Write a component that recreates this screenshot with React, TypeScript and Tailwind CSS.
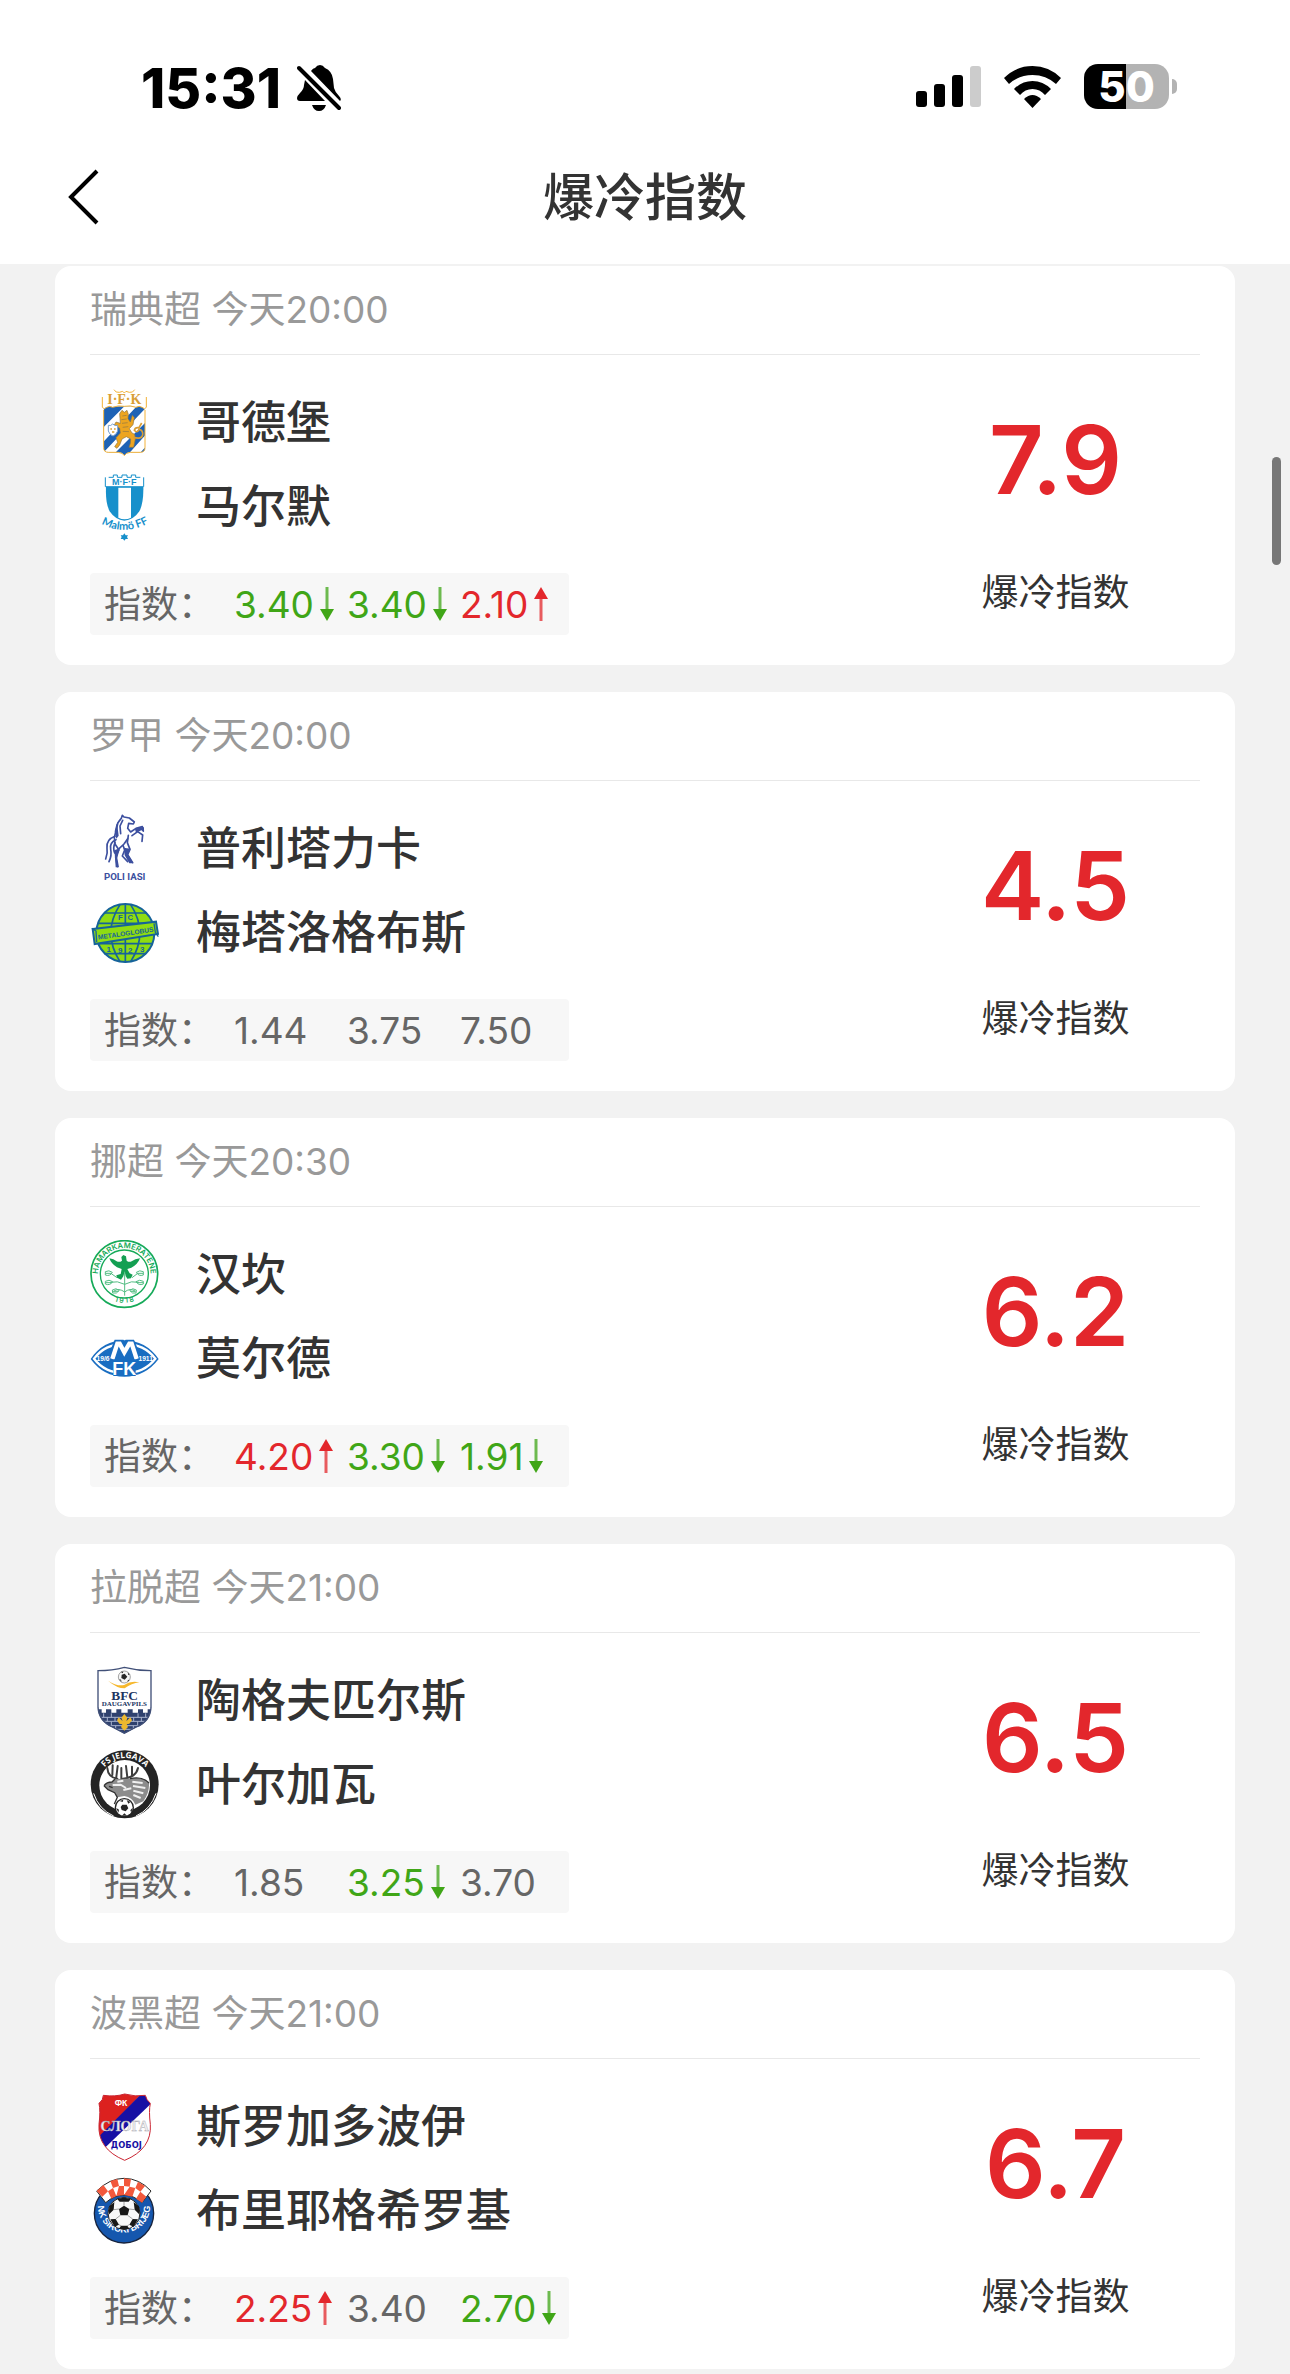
import type { ReactNode } from "react";
import clsx from "clsx";

type Trend = "up" | "down" | "flat";

interface Odd {
  value: string;
  trend: Trend;
}

interface Team {
  name: string;
  logo: ReactNode;
}

interface Match {
  league: string;
  time: string;
  home: Team;
  away: Team;
  odds: Odd[];
  score: string;
}

function Crest({ viewBox, children }: { viewBox: string; children: ReactNode }) {
  return (
    <svg viewBox={viewBox} className="size-[69px] shrink-0" aria-hidden="true">
      {children}
    </svg>
  );
}

function GothenburgCrest() {
  return (
    <Crest viewBox="30 24 207 207">
      <defs>
        <clipPath id="ifk">
          <path d="M71 88Q80 76 98 81Q133 76 168 81Q186 76 195 88V204Q195 217 181 217H151Q139 217 133 226Q127 217 115 217H85Q71 217 71 204Z" />
        </clipPath>
      </defs>
      <g clipPath="url(#ifk)">
        <rect x="66" y="70" width="134" height="160" fill="#1d62b5" />
        <path d="M56 156L150 62H186L66 190V222L214 66V110L96 228H66ZM140 228L210 150V186L172 228Z" fill="#fff" />
      </g>
      <path
        d="M67 51V82Q72 91 80 82Q88 76 98 82Q115 75 133 79Q151 75 168 82Q178 76 186 82Q194 91 199 82V51M71 90V203Q71 217 85 217H115Q128 218 133 227Q138 218 151 217H181Q195 217 195 203V90M102 29Q107 39 118 37L128 34L133 39L138 34L148 37Q159 39 164 29"
        fill="none"
        stroke="#f3b238"
        strokeWidth="3"
      />
      <text x="133" y="71" textAnchor="middle" fontSize="42" fontWeight="700" fill="#d99e35" className="font-['Liberation_Serif']">
        I·F·K
      </text>
      <path
        d="M119 101L126 91L133 97L141 91L145 103L144 116L151 126L157 106L163 113L159 134L148 146L156 159L164 163L166 177L161 202H147L151 190L152 177L139 170L126 177L119 195L111 205L104 200L113 187L108 173L121 159L119 145L103 135L108 126L121 130L120 115Z"
        fill="#eda520"
        stroke="#8d7545"
        strokeWidth="2"
      />
      <path d="M160 172Q185 179 188 165Q190 151 177 148Q171 161 163 151Q165 141 177 143L185 129" fill="none" stroke="#d99e35" strokeWidth="5" />
      <path d="M127 108L140 106M124 119L140 117M126 130L143 128M128 142L145 140M128 154L147 155" stroke="#8d7545" strokeWidth="2" />
      <path d="M85 136Q92 139 98 132Q105 139 113 136V153Q109 164 99 168Q88 164 85 153Z" fill="#fff" stroke="#7ba1cc" strokeWidth="3" />
      <path d="M91 147H96M102 147H107M96 156H103" stroke="#d99e35" strokeWidth="4" />
    </Crest>
  );
}

function MalmoCrest() {
  return (
    <Crest viewBox="30 276 207 207">
      <path d="M78 321H190Q191 370 178 394Q161 420 133 422Q106 420 89 394Q76 370 78 321Z" fill="#1790cb" />
      <path d="M115 323H153V413Q134 422 115 413Z" fill="#fff" />
      <path d="M76 292V320H191V292M86 292H100V285H112V292H126V285H141V292H154V285H167V292H181" fill="none" stroke="#1790cb" strokeWidth="3" />
      <text x="133" y="316" textAnchor="middle" fontSize="27" fontWeight="700" fill="#1790cb" className="font-['Liberation_Sans']">
        M·F·F
      </text>
      <path id="malmo-name" d="M62 430Q133 470 208 428" fill="none" />
      <text fontSize="33" fontWeight="700" fill="#1790cb" className="font-['Lato']">
        <textPath href="#malmo-name" startOffset="50%" textAnchor="middle">
          Malmö FF
        </textPath>
      </text>
      <path d="M133 460L137 466H144L141 471L144 477H137L133 482L129 477H122L125 471L122 466H129Z" fill="#1790cb" />
    </Crest>
  );
}

function IasiCrest() {
  return (
    <Crest viewBox="30 42 207 207">
      <g fill="none" stroke="#3c4f9f" strokeWidth="5" strokeLinejoin="round" strokeLinecap="round">
        <path d="M127 46L124 55L114 68L109 88L103 112L105 132M127 46L132 51L148 54L163 66L160 72L146 70L143 85L152 96L168 85L187 80L190 93M156 107L173 95L188 105L186 124M145 106L142 128L150 148L143 164L158 188M105 132L117 150L107 171L112 200" />
        <path d="M105 109Q78 119 81 144Q84 160 77 177M108 119Q88 127 92 148Q96 166 87 185M105 128Q98 144 104 159" />
        <path d="M128 61L120 78L122 101M143 116L132 132L118 145M129 136L134 150L127 168L143 185" />
      </g>
      <path d="M103 151L119 145L112 174L117 202H107L105 172ZM131 143L151 146L144 163L160 190H148L134 166ZM121 54L112 75L116 107L109 116L104 94L109 73ZM165 88L179 82L192 82V96L184 91L168 98Z" fill="#3c4f9f" />
      <text x="134" y="240" textAnchor="middle" fontSize="29" fontWeight="700" fill="#3c4f9f" className="font-['Roboto']">
        POLI IASI
      </text>
    </Crest>
  );
}

function MetaloglobusCrest() {
  return (
    <Crest viewBox="30 294 207 207">
      <circle cx="136" cy="399" r="87" fill="#8fdc12" stroke="#16639a" strokeWidth="6" />
      <g fill="none" stroke="#16639a" strokeWidth="5">
        <path d="M136 312V487M120 314Q65 399 120 485M152 314Q207 399 152 485M72 339H200M53 370H218M54 431H218M73 461H198" />
      </g>
      <path d="M38 387L228 365L234 402L44 432Z" fill="#8fdc12" stroke="#16639a" strokeWidth="6" />
      <path d="M36 385L48 393L50 426M235 410L226 397L222 370" fill="none" stroke="#16639a" strokeWidth="4" />
      <g fill="#16639a" fontWeight="700" textAnchor="middle" className="font-['Liberation_Sans']">
        <text x="137" y="407" fontSize="20" transform="rotate(-8 137 400)">
          METALOGLOBUS
        </text>
        <text x="121" y="359" fontSize="23">F</text>
        <text x="151" y="359" fontSize="23">C</text>
        <text x="86" y="457" fontSize="24">1</text>
        <text x="121" y="458" fontSize="24">9</text>
        <text x="151" y="458" fontSize="24">2</text>
        <text x="187" y="457" fontSize="24">3</text>
      </g>
    </Crest>
  );
}

function HamKamCrest() {
  return (
    <Crest viewBox="30 30 207 207">
      <circle cx="133" cy="132" r="100" fill="#fff" stroke="#16aa59" strokeWidth="5" />
      <circle cx="133" cy="132" r="72" fill="none" stroke="#16aa59" strokeWidth="4" />
      <path id="hamkam-top" d="M66 175A79 79 0 1 1 200 175" fill="none" />
      <text fontSize="23" fontWeight="600" fill="#16aa59" className="font-['Inter']">
        <textPath href="#hamkam-top" startOffset="50%" textAnchor="middle">
          HAMARKAMERATENE
        </textPath>
      </text>
      <path id="hamkam-year" d="M83 203A88 88 0 0 0 183 203" fill="none" />
      <text fontSize="21" fontWeight="600" fill="#16aa59" className="font-['Inter']">
        <textPath href="#hamkam-year" startOffset="50%" textAnchor="middle">
          1 9 1 8
        </textPath>
      </text>
      <path
        d="M88 85Q101 87 110 94Q119 98 126 92L124 81L130 75L138 79L140 92Q147 98 155 94Q165 87 180 85Q173 104 154 113L142 117L149 130L158 134L153 145L142 146L137 138L134 125L130 139L123 149L111 143L109 136L122 132L125 117L111 112Q94 102 88 85Z"
        fill="#139f52"
      />
      <g fill="none" stroke="#53bd83" strokeWidth="3">
        <path d="M134 125V197M134 163Q112 151 91 157M134 163Q154 151 176 157M134 186Q116 173 102 183M134 186Q150 173 165 183M111 143L94 131M156 143L172 131" />
        <path d="M76 125Q87 119 97 127Q90 140 76 135ZM190 125Q179 119 169 127Q176 140 190 135ZM76 154Q87 147 98 155Q90 168 76 162ZM190 154Q179 147 168 155Q176 168 190 162ZM97 180Q108 172 118 181Q110 193 98 189ZM169 180Q158 172 149 181Q157 193 168 189Z" />
        <path d="M77 130H95M171 130H189M77 158H96M171 158H189M99 184H116M151 184H167" />
      </g>
    </Crest>
  );
}

function MoldeCrest() {
  return (
    <Crest viewBox="30 282 207 207">
      <path d="M32 387Q70 331 133 331Q196 331 236 387Q196 440 133 440Q70 440 32 387Z" fill="#196dc1" />
      <path d="M42 386Q75 342 133 342Q193 342 226 386Q193 429 133 429Q75 429 42 386Z" fill="none" stroke="#fff" strokeWidth="7" />
      <path d="M91 386L110 338H125L133 354L142 338H156L176 386" fill="#196dc1" stroke="#196dc1" strokeWidth="18" />
      <path d="M97 387L112 341H119L133 367L148 341H155L170 387" fill="none" stroke="#fff" strokeWidth="13" />
      <rect x="100" y="388" width="67" height="50" fill="#196dc1" />
      <g fill="#fff" fontWeight="700" textAnchor="middle" className="font-['Liberation_Sans']">
        <text x="133" y="434" fontSize="54">FK</text>
        <text x="69" y="392" fontSize="20">19/6</text>
        <text x="197" y="392" fontSize="20">1911</text>
      </g>
    </Crest>
  );
}

function DaugavpilsCrest() {
  return (
    <Crest viewBox="30 32 207 207">
      <defs>
        <clipPath id="bfc">
          <path d="M53 45Q97 45 133 34Q172 45 214 45V157Q211 200 169 216L133 235L97 216Q56 198 53 157Z" />
        </clipPath>
      </defs>
      <g clipPath="url(#bfc)">
        <path d="M50 30H218V240H50Z" fill="#fff" />
        <path d="M50 162H65V172H78V162H94V172H109V162H124V172H143V162H158V172H174V162H189V172H203V162H218V240H50Z" fill="#2f416e" />
        <path d="M50 186H218M60 198H207M70 211H197M90 222H177M71 174V186M94 174V186M174 174V186M197 174V186M82 186V198M105 186V198M161 186V198M184 186V198M94 198V211M173 198V211M107 211V222M160 211V222" stroke="#a9b4cf" strokeWidth="3" />
      </g>
      <path d="M54 46Q97 46 133 36Q172 46 213 46V157Q210 199 169 215L133 234L97 215Q57 197 54 157Z" fill="none" stroke="#415078" strokeWidth="4" />
      <circle cx="133" cy="65" r="18" fill="#f5f5f5" stroke="#777" strokeWidth="2" />
      <path d="M125 58L134 55L142 64L134 73L124 68ZM122 49L130 49L128 54ZM143 51L149 58L145 59ZM117 71L123 73L125 80ZM144 74L149 73L142 80Z" fill="#252525" />
      <path d="M84 76Q112 94 132 89Q153 75 178 81Q155 84 134 99Q111 99 84 76Z" fill="#f6b82d" />
      <g fill="#20345f" fontWeight="700" textAnchor="middle" className="font-['Liberation_Serif']">
        <text x="134" y="133" fontSize="40">BFC</text>
        <text x="133" y="153" fontSize="21">DAUGAVPILS</text>
      </g>
      <path d="M133 176L142 187L139 198L151 186L156 195L148 205L140 207L144 215L133 226L123 215L127 207L118 205L111 195L116 186L128 198L124 187Z" fill="#edb82f" />
    </Crest>
  );
}

function JelgavaCrest() {
  return (
    <Crest viewBox="30 284 207 207">
      <circle cx="134" cy="387" r="102" fill="#242424" />
      <circle cx="134" cy="390" r="76" fill="#fff" />
      <path id="jelgava-name" d="M58 366A80 80 0 0 1 212 366" fill="none" />
      <text fontSize="25" fontWeight="700" fill="#fff" className="font-['Open_Sans']">
        <textPath href="#jelgava-name" startOffset="50%" textAnchor="middle">
          FS JELGAVA
        </textPath>
      </text>
      <g fill="none" stroke="#3d3d3d" strokeWidth="6" strokeLinejoin="round" strokeLinecap="round">
        <path d="M112 370Q84 366 82 338M97 359L98 330M109 365L113 332M124 370L124 338M129 370Q168 366 174 338M142 366L138 332M156 360L156 334" />
      </g>
      <path d="M105 371L150 370Q187 362 207 383Q209 412 190 438L166 448Q157 425 133 422L112 426L104 412L84 403L72 391Q80 380 96 380Z" fill="#8c8c8c" />
      <path d="M112 379L130 376M98 389L122 388L138 398M130 404L154 399M157 379L188 383M159 392L196 398M160 406L190 414M160 419L182 428" stroke="#f0f0f0" strokeWidth="6" fill="none" />
      <path d="M72 391Q80 380 96 380L105 371M72 391L84 403L104 412L112 426L103 446M150 370Q187 362 207 383M87 393L98 397" fill="none" stroke="#333" strokeWidth="4" />
      <circle cx="133" cy="457" r="29" fill="#242424" />
      <circle cx="133" cy="457" r="25" fill="#fff" />
      <path d="M127 448H140L145 459L137 468L125 464L122 455ZM119 437L130 433L128 440ZM140 434L151 440L145 445ZM109 458L117 463L115 472ZM151 465L158 457L154 472ZM126 481L133 474L141 481Z" fill="#242424" />
      <path d="M41 414Q56 462 101 482M228 414Q212 462 168 482" fill="none" stroke="#fff" strokeWidth="3" />
    </Crest>
  );
}

function SlogaCrest() {
  return (
    <Crest viewBox="30 33 207 207">
      <defs>
        <clipPath id="sloga">
          <path d="M70 43Q106 48 134 39Q166 48 196 43Q199 57 211 67Q206 90 211 130Q216 204 134 238Q52 204 57 130Q62 90 57 67Q70 57 70 43Z" />
        </clipPath>
      </defs>
      <g clipPath="url(#sloga)">
        <rect x="50" y="33" width="170" height="210" fill="#fff" />
        <path d="M50 33H190L50 179Z" fill="#dc211f" />
        <path d="M180 43L56 167L74 201L212 69L195 42Z" fill="#1710a4" />
      </g>
      <path d="M70 43Q106 48 134 39Q166 48 196 43Q199 57 211 67Q206 90 211 130Q216 204 134 238Q52 204 57 130Q62 90 57 67Q70 57 70 43Z" fill="none" stroke="#ca2532" strokeWidth="3" />
      <g fontWeight="700" textAnchor="middle">
        <text x="123" y="74" fontSize="26" fill="#fff" className="font-['Liberation_Sans']">ФК</text>
        <text x="134" y="150" fontSize="42" fill="#eee" stroke="#a5a5ae" strokeWidth="1" className="font-['Liberation_Serif']">СЛОГА</text>
        <text x="139" y="202" fontSize="25" fill="#1710a4" className="font-['DejaVu_Sans']">ДОБОЈ</text>
      </g>
    </Crest>
  );
}

function SirokiCrest() {
  return (
    <Crest viewBox="30 285 207 207">
      <circle cx="132" cy="397" r="89" fill="#1557ae" stroke="#17233d" strokeWidth="4" />
      <path id="siroki-name" d="M58 352A78 78 0 1 0 206 352" fill="none" />
      <text fontSize="27" fontWeight="700" fill="#fff" className="font-['Liberation_Sans']">
        <textPath href="#siroki-name" startOffset="50%" textAnchor="middle">
          NK ŠIROKI BRIJEG
        </textPath>
      </text>
      <path d="M50 330Q89 292 132 292Q178 292 213 330L186 365Q160 342 132 342Q103 342 77 365Z" fill="#fff" stroke="#252525" strokeWidth="3" />
      <path d="M50 330L70 312L84 331L67 347ZM91 300L112 294L117 315L99 321ZM132 292L153 295L149 317L132 315ZM174 302L195 315L181 332L166 321ZM84 331L99 321L109 345L94 353ZM117 315L132 315V342L109 345ZM149 317L166 321L157 347L132 342ZM181 332L199 347L186 365L168 353Z" fill="#f2583c" />
      <circle cx="132" cy="397" r="48" fill="#f8f8f8" stroke="#222" strokeWidth="3" />
      <path d="M117 384L132 374L148 384L143 403H121ZM111 353L132 350L153 353L146 362H119ZM88 376L103 363L101 386L86 401ZM161 363L177 376L179 401L164 386ZM91 415L107 414L117 431L104 437ZM158 414L174 415L161 437L148 431ZM123 434H142L148 443L132 446L117 443Z" fill="#181818" />
      <path d="M132 374V362M148 384L164 386M143 403L158 414M121 403L107 414M117 384L101 386M117 431L123 434M148 431L142 434" stroke="#777" strokeWidth="2" />
    </Crest>
  );
}

const MATCHES: Match[] = [
  {
    league: "瑞典超",
    time: "今天20:00",
    home: { name: "哥德堡", logo: <GothenburgCrest /> },
    away: { name: "马尔默", logo: <MalmoCrest /> },
    odds: [
      { value: "3.40", trend: "down" },
      { value: "3.40", trend: "down" },
      { value: "2.10", trend: "up" }
    ],
    score: "7.9"
  },
  {
    league: "罗甲",
    time: "今天20:00",
    home: { name: "普利塔力卡", logo: <IasiCrest /> },
    away: { name: "梅塔洛格布斯", logo: <MetaloglobusCrest /> },
    odds: [
      { value: "1.44", trend: "flat" },
      { value: "3.75", trend: "flat" },
      { value: "7.50", trend: "flat" }
    ],
    score: "4.5"
  },
  {
    league: "挪超",
    time: "今天20:30",
    home: { name: "汉坎", logo: <HamKamCrest /> },
    away: { name: "莫尔德", logo: <MoldeCrest /> },
    odds: [
      { value: "4.20", trend: "up" },
      { value: "3.30", trend: "down" },
      { value: "1.91", trend: "down" }
    ],
    score: "6.2"
  },
  {
    league: "拉脱超",
    time: "今天21:00",
    home: { name: "陶格夫匹尔斯", logo: <DaugavpilsCrest /> },
    away: { name: "叶尔加瓦", logo: <JelgavaCrest /> },
    odds: [
      { value: "1.85", trend: "flat" },
      { value: "3.25", trend: "down" },
      { value: "3.70", trend: "flat" }
    ],
    score: "6.5"
  },
  {
    league: "波黑超",
    time: "今天21:00",
    home: { name: "斯罗加多波伊", logo: <SlogaCrest /> },
    away: { name: "布里耶格希罗基", logo: <SirokiCrest /> },
    odds: [
      { value: "2.25", trend: "up" },
      { value: "3.40", trend: "flat" },
      { value: "2.70", trend: "down" }
    ],
    score: "6.7"
  }
];

function StatusBar() {
  return (
    <div className="flex h-[130px] items-start justify-between pt-16 pr-[113px] pl-[141px] text-black">
      <div className="flex h-12 items-center gap-4">
        <span className="text-[55px] leading-[48px] font-extrabold">15:31</span>
        <svg viewBox="0 0 44 46" className="h-[46px] w-11" aria-label="静音">
          <path d="M14 6Q16 3 18 3Q20 0 23 0Q26 0 28 3Q35 6 36 14L37 23Q38 27 42 31Q45 34 43 36Z" />
          <path d="M8 15L28 36H3Q0 36 0 33Q0 31 3 28Q7 24 7 20ZM15 40H29Q27 46 22 46Q17 46 15 40Z" />
          <path d="M2 3L42 43" stroke="currentColor" strokeWidth="4" strokeLinecap="round" />
        </svg>
      </div>
      <div className="flex h-[45px] items-center">
        <svg viewBox="0 0 65 42" className="mr-[23px] h-[42px] w-[65px]" aria-label="信号">
          <rect x="0" y="25" width="11" height="16" rx="3" />
          <rect x="18" y="18" width="11" height="23" rx="3" />
          <rect x="36" y="9" width="11" height="32" rx="3" />
          <rect x="54" y="0" width="11" height="41" rx="3" fill="#cccccc" />
        </svg>
        <svg viewBox="0 0 57 42" className="mr-[23px] h-[42px] w-[57px]" aria-label="无线网络">
          <path d="M0 12Q12 0 28.500 0Q45 0 57 12L52 18Q42 9 28.500 9Q15 9 5 18Z" />
          <path d="M10 23Q18 15 28.500 15Q39 15 47 23L41 29Q36 23 28.500 23Q21 23 16 29Z" />
          <path d="M20 33Q28.500 25 37 33L28.500 42Z" />
        </svg>
        <div className="flex items-center gap-[3px]">
          <div className="flex h-[45px] w-[85px] items-center justify-center rounded-[14px] bg-linear-to-r from-black from-50% to-[#b3b3b3] to-50% text-[42px] leading-[45px] font-extrabold text-white">
            50
          </div>
          <div className="h-[15px] w-[5px] rounded-r-full bg-[#b3b3b3]" />
        </div>
      </div>
    </div>
  );
}

function NavBar() {
  return (
    <div className="flex h-[134px] items-center justify-between px-[66px]">
      <button type="button" aria-label="返回" className="w-9">
        <svg viewBox="0 0 36 56" className="h-14 w-9" fill="none" stroke="black" strokeWidth="4">
          <path d="M31 2L5 28L31 54" />
        </svg>
      </button>
      <h1 className="text-[51px] leading-none font-medium">爆冷指数</h1>
      <div className="w-9" />
    </div>
  );
}

function TrendArrow({ trend }: { trend: Trend }) {
  if (trend === "flat") return null;
  return (
    <svg viewBox="0 0 14 34" className={clsx("h-[34px] w-3.5 shrink-0", trend === "down" && "rotate-180")} aria-hidden="true">
      <path d="M7 0L14 12H0Z" fill="currentColor" />
      <path d="M7 11V34" stroke="currentColor" strokeWidth="3" opacity="0.75" />
    </svg>
  );
}

function OddsRow({ odds }: { odds: Odd[] }) {
  return (
    <div className="mt-8 flex h-[62px] w-[479px] items-center rounded-[4px] bg-[#f7f7f7] pl-3.5 text-[37px] leading-none text-[#666666]">
      <span className="w-[130px] shrink-0">指数：</span>
      {odds.map((odd, i) => (
        <span
          key={i}
          className={clsx(
            "flex w-[113px] shrink-0 items-center gap-1.5 last:w-auto",
            odd.trend === "up" && "text-[#e3272c]",
            odd.trend === "down" && "text-[#40a617]"
          )}
        >
          {odd.value}
          <TrendArrow trend={odd.trend} />
        </span>
      ))}
    </div>
  );
}

function TeamRow({ team }: { team: Team }) {
  return (
    <div className="flex h-[69px] items-center gap-[37px]">
      {team.logo}
      <span className="text-[45px] leading-none font-medium">{team.name}</span>
    </div>
  );
}

function MatchCard({ match }: { match: Match }) {
  return (
    <article className="rounded-2xl bg-white px-[35px] pb-[30px]">
      <div className="flex h-[89px] items-center border-b border-[#e8e8e8] text-[37px] text-[#999999]">
        {match.league} {match.time}
      </div>
      <div className="flex justify-between pt-[33px]">
        <div>
          <div className="flex flex-col gap-[15px]">
            <TeamRow team={match.home} />
            <TeamRow team={match.away} />
          </div>
          <OddsRow odds={match.odds} />
        </div>
        <div className="flex w-[289px] flex-col items-center pt-6">
          <span className="text-[95px] leading-[96px] font-semibold text-[#e3272c]">
            {match.score}
          </span>
          <span className="mt-[61px] text-[37px] leading-[48px]">爆冷指数</span>
        </div>
      </div>
    </article>
  );
}

export default function App() {
  return (
    <div className="relative min-h-screen bg-[#f2f2f2] font-['Inter','Noto_Sans_CJK_SC',sans-serif] text-[#333333]">
      <header className="bg-white">
        <StatusBar />
        <NavBar />
      </header>
      <main className="flex flex-col gap-[27px] px-[55px] pt-0.5 pb-[5px]">
        {MATCHES.map((match) => (
          <MatchCard key={match.home.name} match={match} />
        ))}
      </main>
      <div className="absolute top-[457px] right-[9px] h-[108px] w-[9px] rounded-full bg-[#777777]" />
    </div>
  );
}
